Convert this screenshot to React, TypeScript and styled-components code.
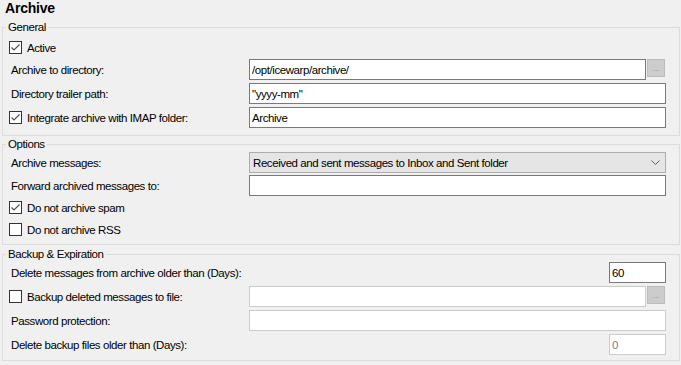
import React from "react";
import styled, { createGlobalStyle } from "styled-components";

const Global = createGlobalStyle`
  html, body { margin: 0; padding: 0; background: #f0f0f0; }
  body { font-family: "Liberation Sans", Arial, sans-serif; font-size: 11.5px; color: #000; }
  * { box-sizing: border-box; }
`;

const Page = styled.div`
  width: 681px;
  height: 365px;
  padding: 0 1px 0 2px;
  background: #f0f0f0;
  letter-spacing: -0.42px;
`;

const Title = styled.div`
  padding: 0 0 4px 3px;
  height: 20px;
  font-size: 14px;
  line-height: 16px;
  font-weight: bold;
  letter-spacing: -0.2px;
`;

const Group = styled.fieldset<{ $mt: number; $pt: number; $pb: number }>`
  margin: ${(p) => p.$mt}px 0 0;
  padding: ${(p) => p.$pt}px 13px ${(p) => p.$pb}px 6px;
  border: 1px solid #dcdcdc;
  min-width: 0;
`;

const Caption = styled.legend`
  padding: 0 2px;
  margin-left: -3px;
  line-height: 14px;
  font-size: 11.5px;
`;

const Row = styled.div<{ $mt?: number }>`
  display: grid;
  grid-template-columns: 240px 417px;
  align-items: center;
  height: 21px;
  margin-top: ${(p) => p.$mt ?? 0}px;
`;

const Label = styled.span`
  padding-left: 2px;
  white-space: nowrap;
`;

const CheckLabel = styled.label`
  display: flex;
  align-items: center;
  gap: 5px;
  white-space: nowrap;
`;

const Box = styled.span`
  width: 13px;
  height: 13px;
  border: 1px solid #333;
  background: #fff;
  display: inline-flex;
  flex: none;
`;

const TextInput = styled.input<{ $w?: number; $disabled?: boolean }>`
  width: ${(p) => (p.$w ? `${p.$w}px` : "100%")};
  height: 21px;
  border: 1px solid ${(p) => (p.$disabled ? "#cccccc" : "#7a7a7a")};
  background: #fff;
  padding: 0 2px;
  font-family: "Liberation Sans", Arial, sans-serif;
  font-size: 11.5px;
  letter-spacing: -0.42px;
  color: ${(p) => (p.$disabled ? "#7d7d7d" : "#000")};
  outline: none;
  justify-self: ${(p) => (p.$w ? "end" : "stretch")};
`;

const Combo = styled.div`
  display: flex;
  align-items: center;
  justify-content: space-between;
  height: 21px;
  border: 1px solid #adadad;
  background: #e5e5e5;
  padding: 0 5px 0 3px;
`;

const BrowseWrap = styled.div`
  display: flex;
  align-items: flex-start;
  gap: 1px;
  height: 21px;
`;

const Browse = styled.button<{ $disabled?: boolean }>`
  width: 18px;
  height: 18px;
  padding: 0 0 3px;
  border: 1px solid #bcbcbc;
  background: #cccccc;
  color: ${(p) => (p.$disabled ? "#b08a8a" : "#8a8a8a")};
  font-family: "Liberation Sans", Arial, sans-serif;
  font-size: 8px;
  line-height: 1;
  display: flex;
  align-items: flex-end;
  justify-content: center;
  letter-spacing: 0;
`;

const Check = ({ checked }: { checked?: boolean }) => (
  <Box>
    {checked && (
      <svg width="11" height="11" viewBox="0 0 11 11">
        <polyline points="1.5,5.5 4,8 9.5,2.5" fill="none" stroke="#555555" strokeWidth="1.2" />
      </svg>
    )}
  </Box>
);

const Chevron = () => (
  <svg width="9" height="5" viewBox="0 0 9 5">
    <polyline points="0.5,0.5 4.5,4.5 8.5,0.5" fill="none" stroke="#606060" strokeWidth="1" />
  </svg>
);

export default function App() {
  return (
    <Page>
      <Global />
      <Title>Archive</Title>

      <Group $mt={0} $pt={3} $pb={7}>
        <Caption>General</Caption>
        <Row>
          <CheckLabel>
            <Check checked />
            Active
          </CheckLabel>
        </Row>
        <Row $mt={1}>
          <Label>Archive to directory:</Label>
          <BrowseWrap>
            <TextInput $w={397} defaultValue="/opt/icewarp/archive/" />
            <Browse>...</Browse>
          </BrowseWrap>
        </Row>
        <Row $mt={3}>
          <Label>Directory trailer path:</Label>
          <TextInput defaultValue={'"yyyy-mm"'} />
        </Row>
        <Row $mt={3}>
          <CheckLabel>
            <Check checked />
            Integrate archive with IMAP folder:
          </CheckLabel>
          <TextInput defaultValue="Archive" />
        </Row>
      </Group>

      <Group $mt={1} $pt={1} $pb={4}>
        <Caption>Options</Caption>
        <Row>
          <Label>Archive messages:</Label>
          <Combo>
            <span>Received and sent messages to Inbox and Sent folder</span>
            <Chevron />
          </Combo>
        </Row>
        <Row $mt={2}>
          <Label>Forward archived messages to:</Label>
          <TextInput defaultValue="" />
        </Row>
        <Row $mt={1}>
          <CheckLabel>
            <Check checked />
            Do not archive spam
          </CheckLabel>
        </Row>
        <Row $mt={1}>
          <CheckLabel>
            <Check />
            Do not archive RSS
          </CheckLabel>
        </Row>
      </Group>

      <Group $mt={2} $pt={1} $pb={5}>
        <Caption>Backup &amp; Expiration</Caption>
        <Row>
          <Label>Delete messages from archive older than (Days):</Label>
          <TextInput $w={57} defaultValue="60" />
        </Row>
        <Row $mt={3}>
          <CheckLabel>
            <Check />
            Backup deleted messages to file:
          </CheckLabel>
          <BrowseWrap>
            <TextInput $w={397} $disabled defaultValue="" />
            <Browse $disabled>...</Browse>
          </BrowseWrap>
        </Row>
        <Row $mt={3}>
          <Label>Password protection:</Label>
          <TextInput $disabled defaultValue="" />
        </Row>
        <Row $mt={3}>
          <Label>Delete backup files older than (Days):</Label>
          <TextInput $w={57} $disabled defaultValue="0" />
        </Row>
      </Group>
    </Page>
  );
}
